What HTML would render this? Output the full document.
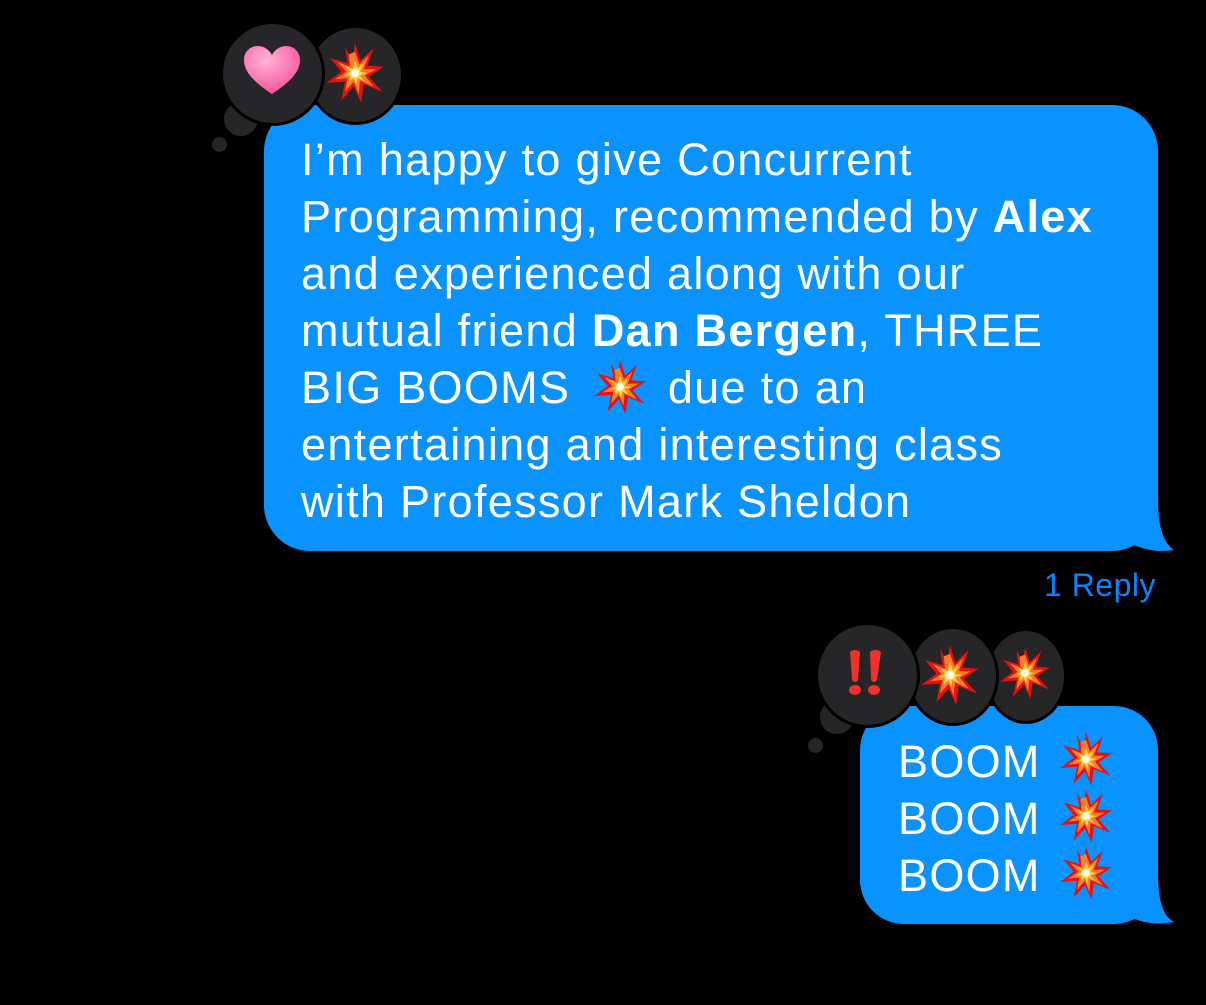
<!DOCTYPE html>
<html><head><meta charset="utf-8"><style>
body{margin:0;width:1206px;height:1005px;background:#000;position:relative;overflow:hidden;font-family:"Liberation Sans",sans-serif;}
.b{position:absolute;background:#0a93fe;border-radius:46px;}
.t{position:absolute;color:#fff;font-size:45px;line-height:57px;white-space:nowrap;letter-spacing:1.3px;}
.c{position:absolute;border-radius:50%;background:#262628;border:3px solid #000;box-sizing:border-box;}
svg{position:absolute;overflow:visible;}
</style></head><body>
<svg width="0" height="0" style="position:absolute">
<defs>
<symbol id="burst" viewBox="-50 -50 100 100">
<polygon fill="#e81010" points="0,-48 9,-20 30,-40 20,-12 46,-10 22,6 44,30 14,18 10,48 -2,22 -22,44 -16,14 -46,16 -22,-2 -40,-24 -12,-16 -16,-42 -4,-20"/>
<polygon fill="#f97d2a" points="0,-34 7,-14 22,-28 14,-6 34,-6 16,4 30,22 8,12 6,34 -2,14 -16,30 -12,8 -32,10 -14,-2 -28,-18 -8,-10 -10,-30"/>
<polygon fill="#ffd23a" points="0,-20 5,-8 14,-16 8,-2 20,0 8,4 16,14 4,8 2,20 -2,8 -10,16 -8,4 -18,4 -8,-2 -16,-12 -4,-6"/>
<circle r="7" fill="#fffbe6"/>
</symbol>
</defs>
</svg>

<div class="b" style="left:264px;top:105px;width:894px;height:446px;"></div>
<svg style="left:0;top:0" width="1206" height="1005"><path d="M1140 500 L1158 500 Q1158 540 1174 550 Q1150 554 1128 542 Z" fill="#0a93fe"/><path d="M1140 875 L1158 875 Q1158 914 1174 922 Q1150 927 1128 916 Z" fill="#0a93fe"/></svg>
<div class="t" style="left:301px;top:131px;">I’m happy to give Concurrent<br>Programming, recommended by <b>Alex</b><br>and experienced along with our<br>mutual friend <b>Dan Bergen</b>, THREE<br>BIG BOOMS <span style="display:inline-block;width:70px;height:40px;vertical-align:-6px;position:relative"><svg style="left:8px;top:-10px" width="56" height="56"><use href="#burst"/></svg></span> due to an<br>entertaining and interesting class<br>with Professor Mark Sheldon</div>

<div class="c" style="left:224px;top:102px;width:34px;height:34px;border:none;"></div>
<div class="c" style="left:212px;top:137px;width:15px;height:15px;border:none;"></div>
<div class="c" style="left:307px;top:25px;width:97px;height:100px;"></div>
<svg style="left:324px;top:42px" width="62" height="62"><use href="#burst"/></svg>
<div class="c" style="left:220px;top:21px;width:105px;height:105px;"></div>
<svg style="left:244px;top:46px" width="56" height="50" viewBox="0 0 56 50"><defs><radialGradient id="h" cx="40%" cy="30%" r="70%"><stop offset="0" stop-color="#ffb3d6"/><stop offset="1" stop-color="#f6559f"/></radialGradient></defs><path d="M28 48 C10 36 0 26 0 14 C0 5 7 0 14 0 C21 0 26 5 28 9 C30 5 35 0 42 0 C49 0 56 5 56 14 C56 26 46 36 28 48 Z" fill="url(#h)"/></svg>

<div style="position:absolute;right:50px;top:567px;color:#0a84ff;font-size:32px;letter-spacing:0.5px;">1 Reply</div>

<div class="b" style="left:860px;top:706px;width:298px;height:218px;border-radius:44px;"></div>
<div class="t" style="left:898px;top:733px;">BOOM<br>BOOM<br>BOOM</div>
<svg style="left:1058px;top:731px" width="56" height="56"><use href="#burst"/></svg>
<svg style="left:1058px;top:788px" width="56" height="56"><use href="#burst"/></svg>
<svg style="left:1058px;top:845px" width="56" height="56"><use href="#burst"/></svg>

<div class="c" style="left:820px;top:700px;width:34px;height:34px;border:none;"></div>
<div class="c" style="left:808px;top:738px;width:15px;height:15px;border:none;"></div>
<div class="c" style="left:985px;top:628px;width:82px;height:96px;"></div>
<svg style="left:998px;top:646px" width="54" height="54"><use href="#burst"/></svg>
<div class="c" style="left:907px;top:626px;width:92px;height:100px;"></div>
<svg style="left:919px;top:644px" width="62" height="62"><use href="#burst"/></svg>
<div class="c" style="left:815px;top:622px;width:105px;height:106px;"></div>
<svg style="left:846px;top:648px" width="40" height="50" viewBox="0 0 40 50"><path d="M4 4 Q9 0 14 4 L12 32 Q9 36 6 32 Z M24 4 Q30 0 35 4 L31 32 Q28 36 25 32 Z" fill="#f0302a"/><ellipse cx="9" cy="42" rx="6" ry="5" fill="#f0302a"/><ellipse cx="28" cy="42" rx="6" ry="5" fill="#f0302a"/></svg>
</body></html>
